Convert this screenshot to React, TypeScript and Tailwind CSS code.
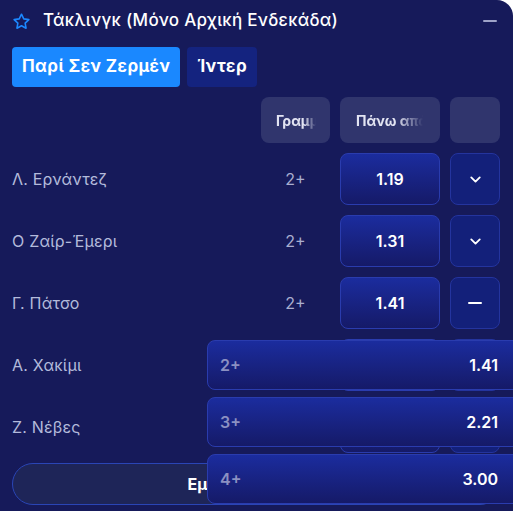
import React from 'react';
import { ChevronDown } from 'lucide-react';

type Row = { name: string; line: string; odds: string; open?: boolean };

const rows: Row[] = [
  { name: 'Λ. Ερνάντεζ', line: '2+', odds: '1.19' },
  { name: 'Ο Ζαίρ-Έμερι', line: '2+', odds: '1.31' },
  { name: 'Γ. Πάτσο', line: '2+', odds: '1.41', open: true },
  { name: 'Α. Χακίμι', line: '2+', odds: '1.41' },
  { name: 'Ζ. Νέβες', line: '2+', odds: '1.41' },
];

const options = [
  { line: '2+', odds: '1.41' },
  { line: '3+', odds: '2.21' },
  { line: '4+', odds: '3.00' },
  { line: '5+', odds: '4.50' },
];

const oddsBox =
  'border border-[#2a3cae] bg-gradient-to-b from-[#1b2c9e] to-[#151a68] rounded-lg';

export default function App() {
  return (
    <div
      className="relative w-[513px] h-[511px] overflow-hidden bg-[#161a5a] rounded-tr-2xl text-white"
      style={{ fontFamily: 'Inter, "Noto Sans", "DejaVu Sans", sans-serif' }}
    >
      {/* header */}
      <div className="flex items-center h-[42px] pl-3 pr-4">
        <svg width="19" height="19" viewBox="0 0 24 24" fill="none" stroke="#1c88ff" strokeWidth="2" strokeLinejoin="round">
          <path d="M12 2.8l2.85 5.9 6.45.9-4.7 4.5 1.15 6.4L12 17.4l-5.75 3.1 1.15-6.4-4.7-4.5 6.45-.9z" />
        </svg>
        <div className="ml-3 text-[17px] font-medium tracking-[0.3px]">Τάκλινγκ (Μόνο Αρχική Ενδεκάδα)</div>
        <div className="ml-auto w-[14px] h-[2px] bg-[#9ea3c8] rounded" />
      </div>

      {/* teams */}
      <div className="flex gap-[7px] pl-3 mt-[5px]">
        <button className="h-10 px-[10px] rounded-[4px] bg-[#1a88ff] text-[17px] font-bold tracking-[0.4px]">Παρί Σεν Ζερμέν</button>
        <button className="h-10 px-[10px] rounded-[4px] bg-[#14237f] text-[17px] font-bold tracking-[0.4px]">Ίντερ</button>
      </div>

      {/* column headings */}
      <div className="flex items-center pl-3 pr-[13px] mt-[10px] gap-[10px]">
        <div className="flex-1" />
        <div className="w-[69px] h-[46px] rounded-lg bg-[#30356d] flex items-center pl-[15px] pr-[14px]">
          <span className="block overflow-hidden whitespace-nowrap text-[14px] font-bold text-[#e2e4f2] [mask-image:linear-gradient(to_right,black_70%,transparent)]">Γραμμή</span>
        </div>
        <div className="w-[100px] h-[46px] rounded-lg bg-[#30356d] flex items-center pl-4 pr-[17px]">
          <span className="block overflow-hidden whitespace-nowrap text-[14px] font-bold text-[#e2e4f2] [mask-image:linear-gradient(to_right,black_60%,transparent)]">Πάνω από</span>
        </div>
        <div className="w-[50px] h-[46px] rounded-lg bg-[#30356d]" />
      </div>

      {/* rows */}
      <div className="flex flex-col gap-[10px] mt-[10px] pl-3 pr-[13px]">
        {rows.map((r) => (
          <div key={r.name} className="flex items-center gap-[10px] h-[52px]">
            <div className="flex-1 text-[16px] text-[#b3badb] tracking-[0.2px]">{r.name}</div>
            <div className="w-[69px] text-center text-[16px] text-[#a9aed0]">{r.line}</div>
            <div className={`w-[100px] h-[52px] flex items-center justify-center text-[16px] font-semibold ${oddsBox}`}>
              {r.odds}
            </div>
            <div className="w-[50px] h-[52px] rounded-lg border border-[#24349e] bg-[#13207a] flex items-center justify-center">
              {r.open ? (
                <div className="w-[14px] h-[2px] bg-white rounded" />
              ) : (
                <ChevronDown size={17} strokeWidth={2.6} />
              )}
            </div>
          </div>
        ))}
      </div>

      {/* show more */}
      <div className="pl-3 pr-3 mt-[10px]">
        <button className="w-full h-[42px] pr-3 rounded-full border border-[#2a45b5] bg-[#1e2558] text-[16px] font-bold">
          Εμφάνιση όλων
        </button>
      </div>

      {/* line picker dropdown */}
      <div className="absolute left-[207px] right-[-10px] top-[340px] flex flex-col gap-[7px]">
        {options.map((o) => (
          <div key={o.line} className={`h-[50px] flex items-center justify-between pl-3 pr-[24px] ${oddsBox}`}>
            <span className="text-[16px] font-semibold text-[#8b90c2]">{o.line}</span>
            <span className="text-[16px] font-semibold">{o.odds}</span>
          </div>
        ))}
      </div>
    </div>
  );
}
